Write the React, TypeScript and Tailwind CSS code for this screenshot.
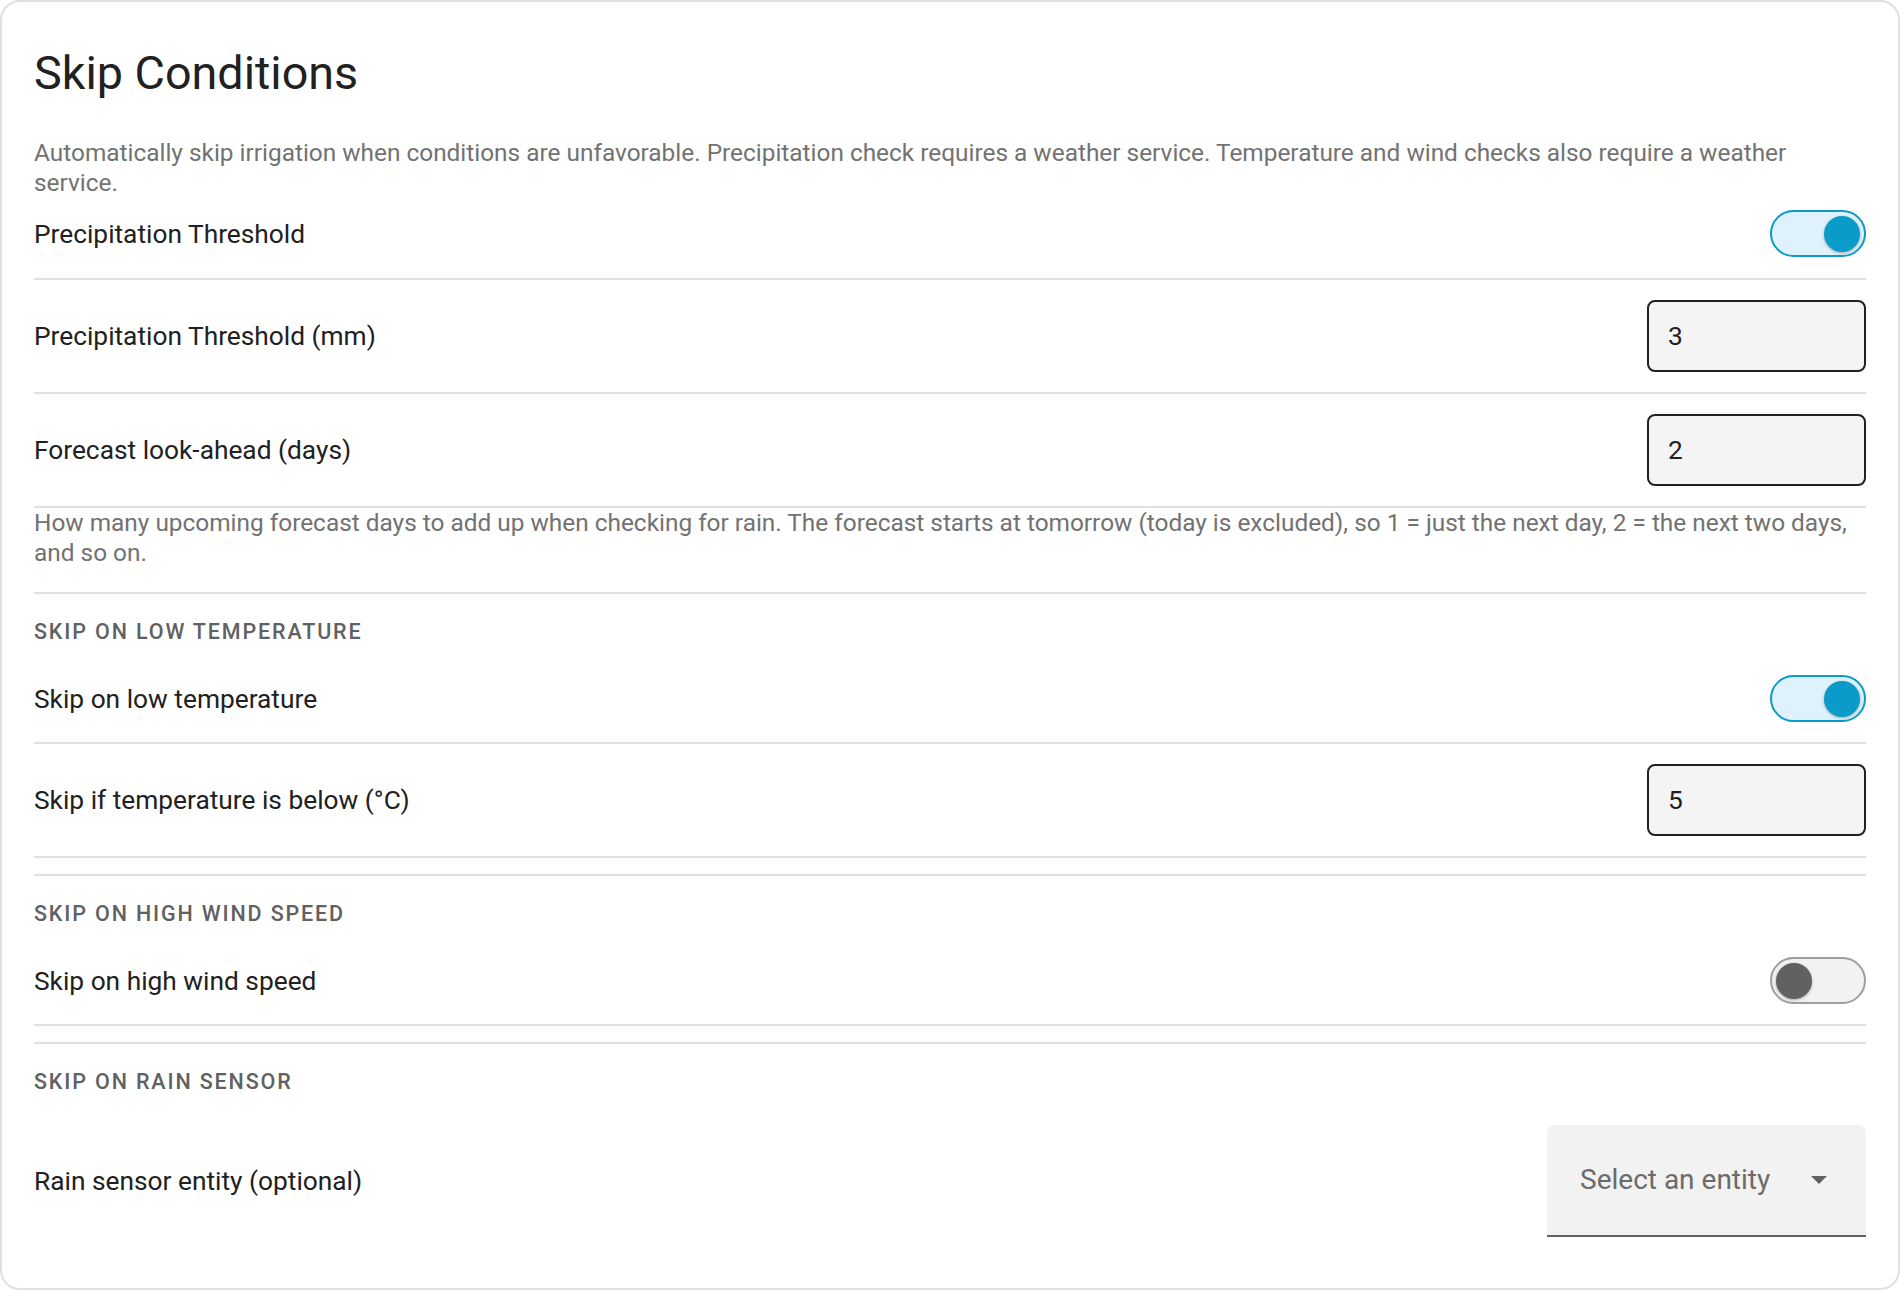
import { useState } from 'react';

type FieldProps = { label: string; value: string };

function Toggle({ checked, onChange }: { checked: boolean; onChange: (v: boolean) => void }) {
  return (
    <button
      type="button"
      role="switch"
      aria-checked={checked}
      onClick={() => onChange(!checked)}
      className={
        checked
          ? 'relative flex h-[47px] w-[96px] shrink-0 items-center rounded-full border-2 border-[#0a9bc9] bg-[#dff1fa] px-[4px] justify-end'
          : 'relative flex h-[47px] w-[96px] shrink-0 items-center rounded-full border-2 border-[#9e9e9e] bg-[#f2f2f2] px-[4px] justify-start'
      }
    >
      <span
        className={
          checked
            ? 'block h-[36px] w-[36px] rounded-full bg-[#0a9bc9] shadow-[0_1px_3px_rgba(0,0,0,0.3)]'
            : 'block h-[36px] w-[36px] rounded-full bg-[#616161] shadow-[0_1px_3px_rgba(0,0,0,0.3)]'
        }
      />
    </button>
  );
}

function ToggleRow({ label, initial, first }: { label: string; initial: boolean; first?: boolean }) {
  const [on, setOn] = useState(initial);
  return (
    <div
      className={
        first
          ? 'flex items-center justify-between border-b-2 border-[#e0e0e0] pt-3 pb-[21px]'
          : 'flex items-center justify-between border-b-2 border-[#e0e0e0] py-5'
      }
    >
      <span className="text-[26.3px] leading-[32px] text-[#212121]">{label}</span>
      <Toggle checked={on} onChange={setOn} />
    </div>
  );
}

function NumberRow({ label, value }: FieldProps) {
  const [val, setVal] = useState(value);
  return (
    <div className="flex items-center justify-between border-b-2 border-[#e0e0e0] py-5">
      <span className="text-[26.3px] leading-[32px] text-[#212121]">{label}</span>
      <input
        type="number"
        value={val}
        onChange={(e) => setVal(e.target.value)}
        className="h-[72px] w-[219px] rounded-[8px] border-2 border-[#212121] bg-[#f4f4f4] pl-[19px] text-[26.3px] text-[#212121] outline-none [appearance:textfield] [&::-webkit-inner-spin-button]:appearance-none"
      />
    </div>
  );
}

function SectionHeader({ children }: { children: string }) {
  return (
    <div className="pt-[23px] pb-[8px] text-[21.5px] leading-[30px] font-medium uppercase tracking-[0.086em] text-[#616161]">
      {children}
    </div>
  );
}

export default function App() {
  return (
    <div className="min-h-screen bg-white font-['Roboto',sans-serif]">
      <div className="rounded-[20px] border-2 border-[#e0e0e0] bg-white px-8 pt-[43px] pb-[34px]">
        <h1 className="text-[46.7px] leading-[56px] font-normal text-[#212121]">Skip Conditions</h1>
        <p className="mt-[37px] text-[24.4px] leading-[30px] text-[#727272]">
          Automatically skip irrigation when conditions are unfavorable. Precipitation check requires a weather
          service. Temperature and wind checks also require a weather service.
        </p>

        <ToggleRow label="Precipitation Threshold" initial={true} first />
        <NumberRow label="Precipitation Threshold (mm)" value="3" />
        <NumberRow label="Forecast look-ahead (days)" value="2" />
        <p className="pb-6 text-[24.4px] leading-[30px] text-[#727272]">
          How many upcoming forecast days to add up when checking for rain. The forecast starts at tomorrow (today is
          excluded), so 1 = just the next day, 2 = the next two days, and so on.
        </p>

        {/* low temperature */}
        <div className="border-t-2 border-[#e0e0e0] pb-4">
          <SectionHeader>Skip on low temperature</SectionHeader>
          <ToggleRow label="Skip on low temperature" initial={true} />
          <NumberRow label="Skip if temperature is below (°C)" value="5" />
        </div>

        {/* wind */}
        <div className="border-t-2 border-[#e0e0e0] pb-4">
          <SectionHeader>Skip on high wind speed</SectionHeader>
          <ToggleRow label="Skip on high wind speed" initial={false} />
        </div>

        {/* rain sensor */}
        <div className="border-t-2 border-[#e0e0e0]">
          <SectionHeader>Skip on rain sensor</SectionHeader>
          <div className="flex items-center justify-between pt-5 pb-[17px]">
            <span className="text-[26.3px] leading-[32px] text-[#212121]">Rain sensor entity (optional)</span>
            <button
              type="button"
              className="flex h-[112px] w-[319px] items-center justify-between rounded-t-[8px] border-b-2 border-[#616161] bg-[#f2f2f2] pl-[33px] pr-[39px]"
            >
              <span className="text-[28px] leading-[34px] text-[#6b6b6b]">Select an entity</span>
              <svg width="16" height="8" viewBox="0 0 10 5" aria-hidden="true">
                <path d="M0 0 L10 0 L5 5 Z" fill="#616161" />
              </svg>
            </button>
          </div>
        </div>
      </div>
    </div>
  );
}
